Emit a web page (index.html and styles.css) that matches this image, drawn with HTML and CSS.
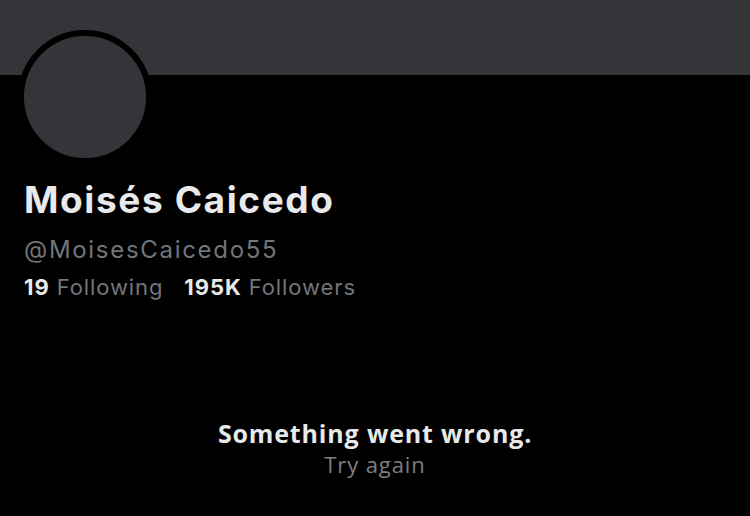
FILE: index.html
```html
<!DOCTYPE html>
<html lang="en">
<head>
    <meta charset="UTF-8">
    <title>Moisés Caicedo (@MoisesCaicedo55)</title>
    <meta name="viewport" content="width=device-width, initial-scale=1.0">
    <link rel="stylesheet" href="styles.css">
</head>
<body>
    <div class="banner"></div>

    <div class="profile">
        <div class="avatar"></div>
        <h1 class="name">Moisés Caicedo</h1>
        <div class="handle">@MoisesCaicedo55</div>
        <div class="stats">
            <span class="stat"><strong>19</strong> Following</span>
            <span class="stat"><strong>195K</strong> Followers</span>
        </div>
    </div>

    <div class="error">
        <div class="error-title">Something went wrong.</div>
        <div class="error-retry">Try again</div>
    </div>
</body>
</html>
```

FILE: styles.css
```css
* {
    margin: 0;
    padding: 0;
    box-sizing: border-box;
}
body {
    background: #000;
    color: #e7e9ea;
    font-family: Inter, 'Liberation Sans', sans-serif;
    width: 750px;
    height: 516px;
    overflow: hidden;
}
.banner {
    height: 75px;
    background: #333538;
}
.profile {
    padding-left: 18px;
}
.avatar {
    width: 134px;
    height: 134px;
    margin-top: -45px;
    border-radius: 50%;
    border: 6px solid #000;
    background: #333538;
}
.name {
    font-size: 37px;
    font-weight: 700;
    line-height: 40px;
    letter-spacing: 1.6px;
    margin-top: 16px;
    padding-left: 6px;
}
.handle {
    font-size: 24px;
    line-height: 28px;
    letter-spacing: 1.7px;
    color: #71767b;
    margin-top: 16px;
    padding-left: 6px;
}
.stats {
    display: flex;
    gap: 21px;
    font-size: 22px;
    line-height: 28px;
    letter-spacing: 0.9px;
    color: #71767b;
    margin-top: 9px;
    padding-left: 6px;
}
.stats strong {
    color: #e7e9ea;
    font-weight: 700;
}
.error {
    margin-top: 118px;
    text-align: center;
    font-family: 'Open Sans', sans-serif;
}
.error-title {
    font-size: 25px;
    font-weight: 700;
    line-height: 28px;
    letter-spacing: 0.85px;
    color: #e7e9ea;
}
.error-retry {
    font-size: 22px;
    line-height: 26px;
    letter-spacing: 0.9px;
    margin-top: 4px;
    color: #7c7f83;
}
```
